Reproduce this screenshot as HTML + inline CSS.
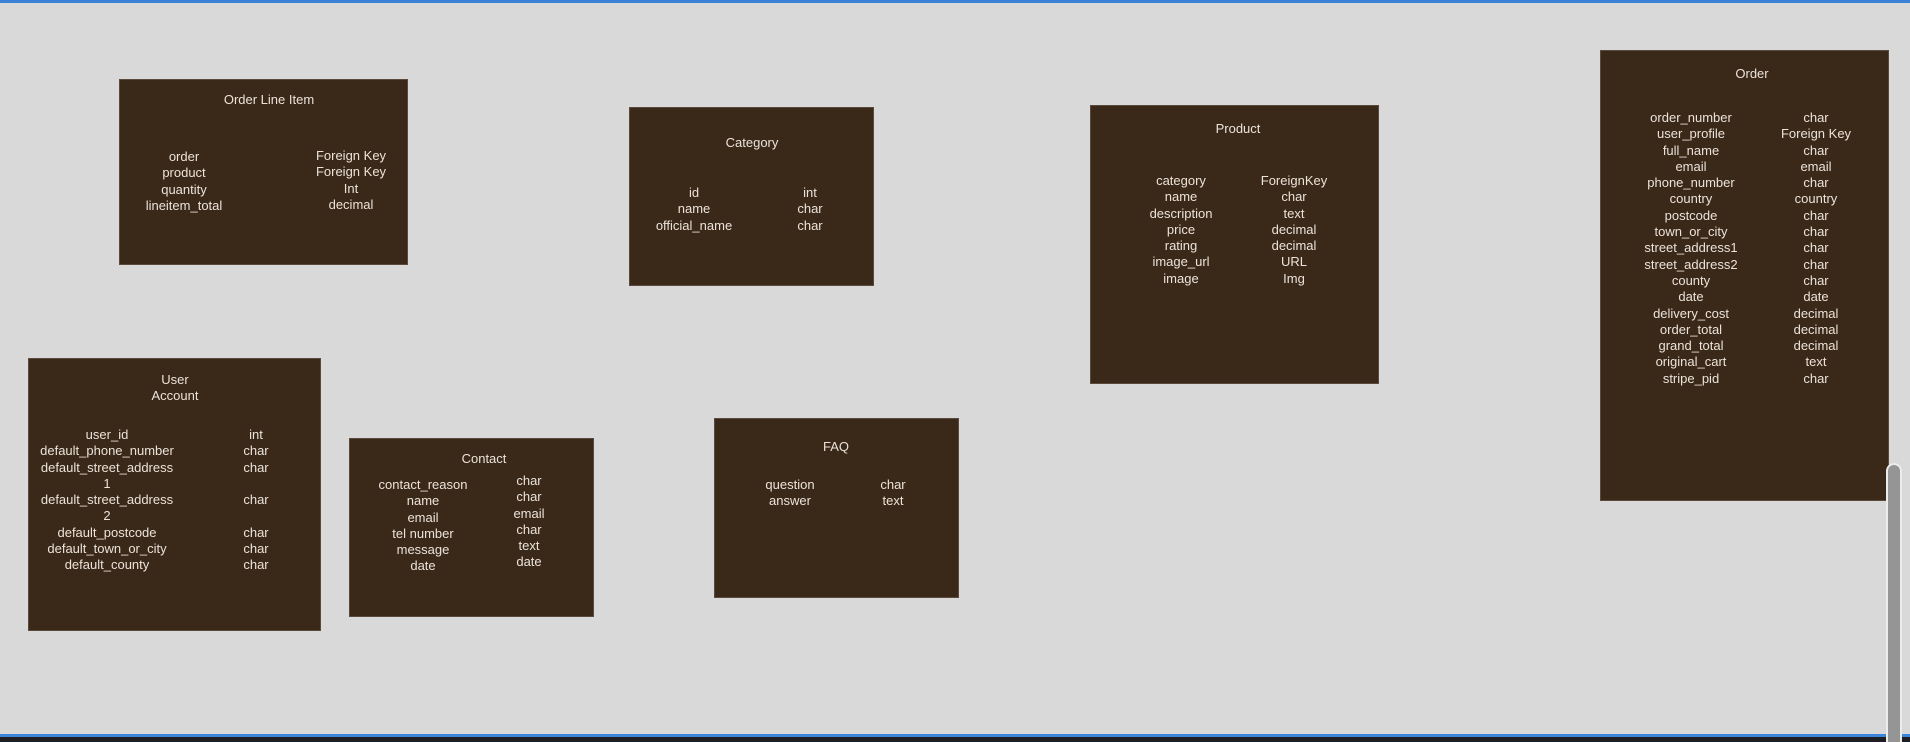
<!DOCTYPE html>
<html style="width:1910px;height:742px;overflow:hidden"><head><meta charset="utf-8"><style>
html,body{margin:0;padding:0}
body{width:1910px;height:742px;background:#d9d9d9;position:relative;overflow:hidden;font-family:"Liberation Sans",sans-serif;font-size:13px;color:#ebe3da}
.b{position:absolute;background:#3a2819;box-shadow:0 0 0 1px #5a4a3e}
.c{position:absolute;width:240px;text-align:center;line-height:16.3px;white-space:nowrap}
</style></head><body>
<div style="position:absolute;left:0;top:0;width:1910px;height:3px;background:#3b82d6"></div>
<div style="position:absolute;left:0;top:734px;width:1910px;height:3px;background:#3b86da"></div>
<div style="position:absolute;left:0;top:737px;width:1910px;height:5px;background:#1e1f22"></div>

<div class="b" style="left:120px;top:80px;width:287px;height:184px"></div>
<div class="c" style="left:149px;top:92px">Order Line Item</div>
<div class="c" style="left:64px;top:149px">order<br>product<br>quantity<br>lineitem_total</div>
<div class="c" style="left:231px;top:148px">Foreign Key<br>Foreign Key<br>Int<br>decimal</div>

<div class="b" style="left:630px;top:108px;width:243px;height:177px"></div>
<div class="c" style="left:632px;top:135px">Category</div>
<div class="c" style="left:574px;top:185px">id<br>name<br>official_name</div>
<div class="c" style="left:690px;top:185px">int<br>char<br>char</div>

<div class="b" style="left:1091px;top:106px;width:287px;height:277px"></div>
<div class="c" style="left:1118px;top:121px">Product</div>
<div class="c" style="left:1061px;top:173px">category<br>name<br>description<br>price<br>rating<br>image_url<br>image</div>
<div class="c" style="left:1174px;top:173px">ForeignKey<br>char<br>text<br>decimal<br>decimal<br>URL<br>Img</div>

<div class="b" style="left:1601px;top:51px;width:287px;height:449px"></div>
<div class="c" style="left:1632px;top:66px">Order</div>
<div class="c" style="left:1571px;top:110px">order_number<br>user_profile<br>full_name<br>email<br>phone_number<br>country<br>postcode<br>town_or_city<br>street_address1<br>street_address2<br>county<br>date<br>delivery_cost<br>order_total<br>grand_total<br>original_cart<br>stripe_pid</div>
<div class="c" style="left:1696px;top:110px">char<br>Foreign Key<br>char<br>email<br>char<br>country<br>char<br>char<br>char<br>char<br>char<br>date<br>decimal<br>decimal<br>decimal<br>text<br>char</div>

<div class="b" style="left:29px;top:359px;width:291px;height:271px"></div>
<div class="c" style="left:55px;top:372px">User<br>Account</div>
<div class="c" style="left:-13px;top:427px">user_id<br>default_phone_number<br>default_street_address<br>1<br>default_street_address<br>2<br>default_postcode<br>default_town_or_city<br>default_county</div>
<div class="c" style="left:136px;top:427px">int<br>char<br>char<br><br>char<br><br>char<br>char<br>char</div>

<div class="b" style="left:350px;top:439px;width:243px;height:177px"></div>
<div class="c" style="left:364px;top:451px">Contact</div>
<div class="c" style="left:303px;top:477px">contact_reason<br>name<br>email<br>tel number<br>message<br>date</div>
<div class="c" style="left:409px;top:473px">char<br>char<br>email<br>char<br>text<br>date</div>

<div class="b" style="left:715px;top:419px;width:243px;height:178px"></div>
<div class="c" style="left:716px;top:439px">FAQ</div>
<div class="c" style="left:670px;top:477px">question<br>answer</div>
<div class="c" style="left:773px;top:477px">char<br>text</div>

<div style="position:absolute;left:1886px;top:463px;width:16px;height:279px;background:#ececec;border-radius:8px 8px 0 0"></div>
<div style="position:absolute;left:1888px;top:465px;width:12px;height:277px;background:#959595;border-radius:6px 6px 0 0"></div>
</body></html>
